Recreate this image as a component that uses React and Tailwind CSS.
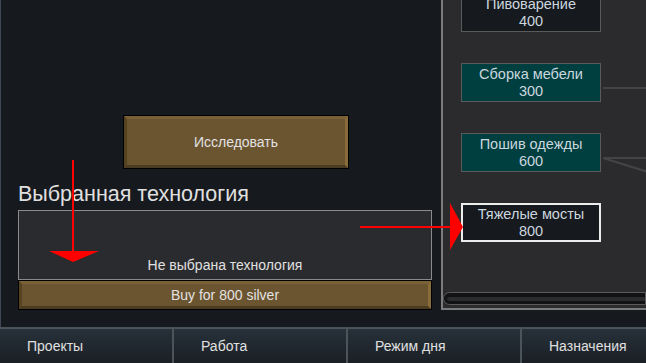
const font = { fontFamily: '"Liberation Sans", Arial, sans-serif' }

function BevelButton({ className, children }) {
  return (
    <div className={`border border-black bg-[#6b5430] ${className}`}>
      <div className="h-full w-full border-[3px] border-t-[#7a6036] border-r-[#8a6c3b] border-b-[#4b3b20] border-l-[#55431f] flex items-center justify-center text-[14px] text-[#e2e2e2]">
        {children}
      </div>
    </div>
  )
}

function TechNode({ name, cost, variant }) {
  const styles = {
    dark: 'bg-[#16191e] border border-[#5a5a5a]',
    teal: 'bg-[#003f3f] border border-[#5a5a5a]',
    selected: 'bg-[#16191e] border-2 border-[#ececec]',
  }
  return (
    <div className={`w-[140px] h-[39px] flex flex-col items-center justify-center text-[14.5px] leading-[17px] text-[#cbd7df] ${styles[variant]}`}>
      <span>{name}</span>
      <span>{cost}</span>
    </div>
  )
}

function BottomTab({ label, last }) {
  return (
    <div className={`h-full flex items-center pl-[27px] bg-gradient-to-b from-[#27313a] to-[#1a1f25] text-[14px] text-[#e0e0e0] ${last ? 'flex-1' : 'w-[174px] border-r-[2px] border-[#4b535b]'}`}>
      {label}
    </div>
  )
}

export default function App() {
  return (
    <div className="relative w-[646px] h-[363px] bg-[#16191e] overflow-hidden flex flex-col" style={font}>
      <div className="flex h-[327px]">
        <div className="w-[441px] border-l border-[#3f4756] flex flex-col pl-[17px]">
          <BevelButton className="mt-[115px] ml-[105px] w-[226px] h-[54px]">Исследовать</BevelButton>
          <div className="mt-[13px] h-[28px] text-[21.5px] leading-[24px] text-[#e0e0e0]">Выбранная технология</div>
          <div className="w-[414px] h-[70px] border border-[#8a8a8a] bg-[#2a2b2e] flex items-end justify-center pb-[6px] text-[14px] leading-[16px] text-[#e0e0e0]">
            Не выбрана технология
          </div>
          <BevelButton className="w-[414px] h-[30px]">Buy for 800 silver</BevelButton>
        </div>
        <div className="relative flex-1 h-[310px] bg-[#2b2b2d] border-l-2 border-b-2 border-[#7c7c7c] flex flex-col overflow-hidden">
          <svg className="absolute left-0 top-0" width="205" height="300">
            <line x1="160" y1="88" x2="205" y2="88" stroke="#444446" strokeWidth="2" />
            <line x1="160" y1="158" x2="205" y2="158" stroke="#444446" strokeWidth="2" />
            <line x1="160" y1="158" x2="205" y2="172" stroke="#444446" strokeWidth="2" />
          </svg>
          <div className="relative mt-[-7px] ml-[18px] flex flex-col gap-[31px]">
            <TechNode name="Пивоварение" cost="400" variant="dark" />
            <TechNode name="Сборка мебели" cost="300" variant="teal" />
            <TechNode name="Пошив одежды" cost="600" variant="teal" />
            <TechNode name="Тяжелые мосты" cost="800" variant="selected" />
          </div>
          <div className="mt-auto mb-[3px] h-[13px] rounded-l-full border border-[#5a5a5a] bg-[#111214] flex items-center pl-[3px]">
            <div className="h-[4px] w-full rounded-l-full bg-[#2c2c2e]" />
          </div>
        </div>
      </div>
      <div className="h-[36px] border-t-2 border-[#4b535b] flex">
        <BottomTab label="Проекты" />
        <BottomTab label="Работа" />
        <BottomTab label="Режим дня" />
        <BottomTab label="Назначения" last />
      </div>
      <svg className="absolute left-0 top-0 pointer-events-none" width="646" height="363">
        <line x1="73" y1="160" x2="73" y2="252" stroke="#ff0000" strokeWidth="2" />
        <polygon points="49,251 99,251 73,262" fill="#ff0000" />
        <line x1="360" y1="227" x2="452" y2="227" stroke="#ff0000" strokeWidth="2" />
        <polygon points="450,203 463,227 450,250" fill="#ff0000" />
      </svg>
    </div>
  )
}
